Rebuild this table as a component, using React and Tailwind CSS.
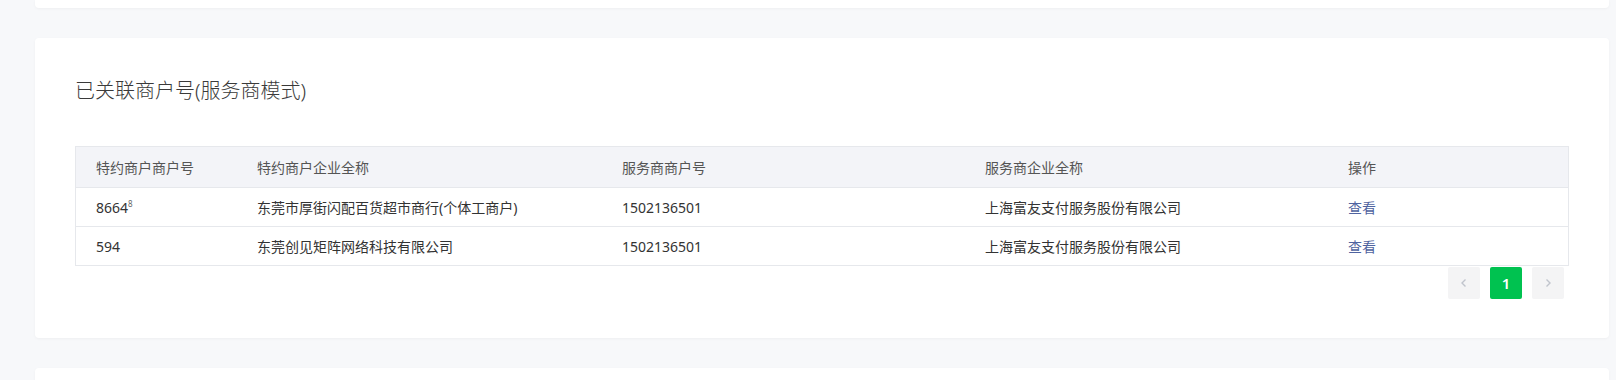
import React from "react";

const rows = [
  { mchId: "8664", tail: "8", mchName: "东莞市厚街闪配百货超市商行(个体工商户)", spId: "1502136501", spName: "上海富友支付服务股份有限公司" },
  { mchId: "594", tail: "", mchName: "东莞创见矩阵网络科技有限公司", spId: "1502136501", spName: "上海富友支付服务股份有限公司" },
];

const cols = "grid grid-cols-[161px_365px_363px_363px_1fr]";

const App = () => {
  return (
    <div
      className="w-[1616px] h-[380px] overflow-hidden bg-[#f7f8fa] pl-[35px] pr-[7px] flex flex-col gap-[30px]"
      style={{ fontFamily: '"Noto Sans", "Noto Sans CJK SC", sans-serif' }}
    >
      <div className="h-[8px] shrink-0 bg-white rounded-b-[4px] shadow-[0_1px_3px_rgba(0,0,0,0.04)]" />

      <div className="h-[300px] shrink-0 bg-white rounded-[4px] shadow-[0_1px_3px_rgba(0,0,0,0.04)] px-[40px] pt-[38px]">
        <h2 className="text-[20px] leading-[30px] text-[#3a3a3a] font-light">已关联商户号(服务商模式)</h2>

        <div className="mt-[40px] border border-[#e6e8ec] text-[14px]">
          <div className={`${cols} h-[41px] items-center bg-[#f3f4f8] text-[#555] border-b border-[#e6e8ec]`}>
            {["特约商户商户号", "特约商户企业全称", "服务商商户号", "服务商企业全称", "操作"].map((h) => (
              <div key={h} className="pl-[20px]">{h}</div>
            ))}
          </div>
          {rows.map((r, i) => (
            <div
              key={r.mchId}
              className={`${cols} h-[38px] box-content items-center text-[#333] ${i < rows.length - 1 ? "border-b border-[#e6e8ec]" : ""}`}
            >
              <div className="pl-[20px]">
                {r.mchId}
                {r.tail && <span className="text-[8px] text-[#666] align-top relative top-[1px]">{r.tail}</span>}
              </div>
              <div className="pl-[20px]">{r.mchName}</div>
              <div className="pl-[20px]">{r.spId}</div>
              <div className="pl-[20px]">{r.spName}</div>
              <div className="pl-[20px]">
                <a className="text-[#4f63a0] cursor-pointer">查看</a>
              </div>
            </div>
          ))}
        </div>

        <div className="flex justify-end gap-[10px] mt-[1px] pr-[5px]">
          <button className="w-[32px] h-[32px] rounded-[2px] bg-[#f4f4f5] text-[#c0c4cc] flex items-center justify-center">
            <svg width="10" height="10" viewBox="0 0 10 10" fill="none" stroke="currentColor" strokeWidth="1.4">
              <path d="M6.5 1.5 3 5l3.5 3.5" />
            </svg>
          </button>
          <button className="w-[32px] h-[32px] rounded-[2px] bg-[#00c250] text-white text-[15px] font-semibold flex items-center justify-center">
            1
          </button>
          <button className="w-[32px] h-[32px] rounded-[2px] bg-[#f4f4f5] text-[#c0c4cc] flex items-center justify-center">
            <svg width="10" height="10" viewBox="0 0 10 10" fill="none" stroke="currentColor" strokeWidth="1.4">
              <path d="M3.5 1.5 7 5 3.5 8.5" />
            </svg>
          </button>
        </div>
      </div>

      <div className="h-[40px] shrink-0 bg-white rounded-t-[4px] shadow-[0_1px_3px_rgba(0,0,0,0.04)]" />
    </div>
  );
};

export default App;
